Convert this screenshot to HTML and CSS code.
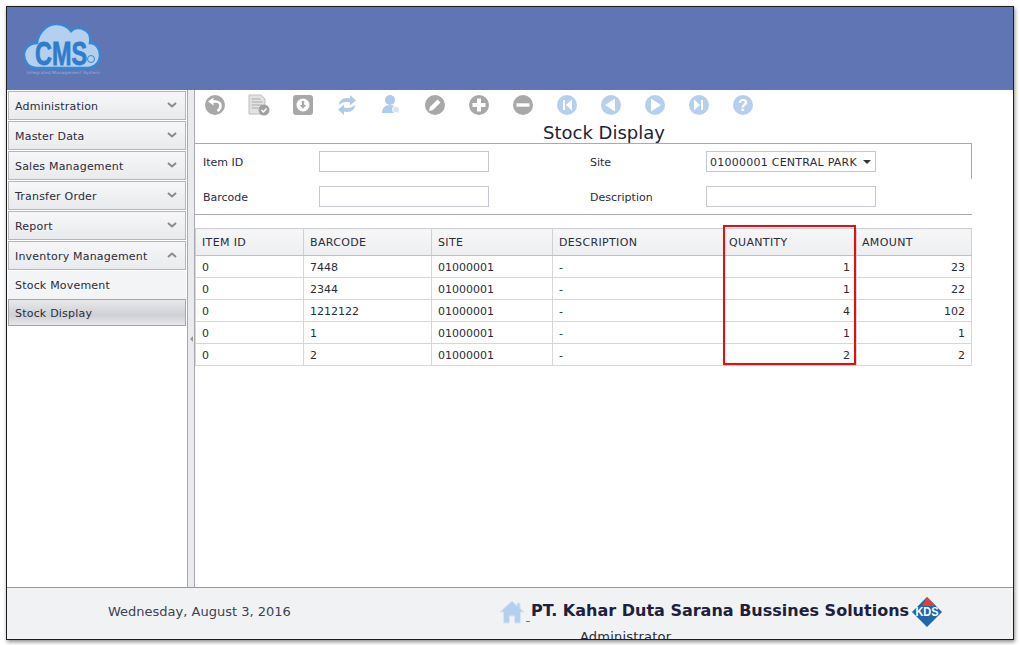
FILE: index.html
```html
<!DOCTYPE html>
<html lang="en">
<head>
<meta charset="UTF-8">
<title>Stock Display</title>
<link rel="stylesheet" href="styles.css">
</head>
<body>
<div class="window">
    <div class="header">
        <svg class="logo" width="80" height="56" viewBox="0 0 80 56">
            <path d="M14 45C5 45 1 38 1 32C1 25 7 20 14 20C15 10 23 1 34 1C41 1 45 4 48 8C51 5 56 4 60 6C66 8 68 14 67 20C73 20 77 26 77 32C77 39 72 45 64 45Z" fill="#b5d0ee" stroke="#3a86d4" stroke-width="2.500"/>
            <text class="logo-text" x="12" y="42" textLength="52" lengthAdjust="spacingAndGlyphs">CMS</text>
            <circle cx="68" cy="36" r="3.500" fill="#b5d0ee" stroke="#3a86d4"/>
            <text class="logo-sub" x="4" y="51" textLength="73" lengthAdjust="spacingAndGlyphs">Integrated Management System</text>
        </svg>
    </div>
    <div class="main">
        <div class="sidebar">
            <div class="menu-head">Administration <svg class="chev" viewBox="0 0 10 6"><path d="M1 1l4 3.500L9 1" /></svg></div>
            <div class="menu-head">Master Data <svg class="chev" viewBox="0 0 10 6"><path d="M1 1l4 3.500L9 1" /></svg></div>
            <div class="menu-head">Sales Management <svg class="chev" viewBox="0 0 10 6"><path d="M1 1l4 3.500L9 1" /></svg></div>
            <div class="menu-head">Transfer Order <svg class="chev" viewBox="0 0 10 6"><path d="M1 1l4 3.500L9 1" /></svg></div>
            <div class="menu-head">Report <svg class="chev" viewBox="0 0 10 6"><path d="M1 1l4 3.500L9 1" /></svg></div>
            <div class="menu-head">Inventory Management <svg class="chev" viewBox="0 0 10 6"><path d="M1 5l4-3.500L9 5" /></svg></div>
            <div class="menu-item">Stock Movement</div>
            <div class="menu-item menu-item-active">Stock Display</div>
        </div>
        <div class="splitter"><span class="split-arrow"></span></div>
        <div class="content">
            <div class="toolbar">
                <svg class="tool" viewBox="0 0 22 22"><circle cx="11" cy="11" r="10" fill="#a8a8a8"/><path d="M8 7.500h3.500c3 0 5 2 5 4.500c0 2-1 3.500-3 5" stroke="#fff" stroke-width="2.600" fill="none"/><path d="M9.500 3.500v8L4 7.500z" fill="#fff"/></svg>
                <svg class="tool" viewBox="0 0 22 22"><path d="M1 1h12l4 4v15H1z" fill="#e2e2e2" stroke="#bdbdbd"/><path d="M3.500 5h9M3.500 8h11M3.500 11h11M3.500 14h7" stroke="#aaa"/><circle cx="16" cy="16" r="5.500" fill="#a0a0a0"/><path d="M13.500 16l2 2 3-3.500" stroke="#fff" stroke-width="1.500" fill="none"/></svg>
                <svg class="tool" viewBox="0 0 22 22"><rect x="1" y="1" width="20" height="20" rx="3" fill="#a8a8a8"/><circle cx="11" cy="11" r="6.500" fill="#fff"/><path d="M9.800 7h2.400v4h2L11 14.800 7.800 11h2z" fill="#a8a8a8"/></svg>
                <svg class="tool" viewBox="0 0 22 22"><path d="M3 11C3 6 8 3 14 4.500V1l6 5.500-6 5V8.500C10 7.500 6 8.500 3 11z" fill="#aecbec"/><path d="M19 11c0 5-5 8-11 6.500V21l-6-5.500 6-5v3c4 1 8 0 11-2.500z" fill="#aecbec"/></svg>
                <svg class="tool" viewBox="0 0 22 22"><circle cx="10" cy="6" r="5" fill="#aecbec"/><path d="M2 19c0-5 3-8 8-8s9 3 9 8z" fill="#aecbec"/><circle cx="16" cy="15.500" r="3.500" fill="#d5e3f4" stroke="#fff"/></svg>
                <svg class="tool" viewBox="0 0 22 22"><circle cx="11" cy="11" r="10" fill="#a8a8a8"/><path d="M13.500 5.500l3 3L9 16l-4 1 1-4z" fill="#fff"/></svg>
                <svg class="tool" viewBox="0 0 22 22"><circle cx="11" cy="11" r="10" fill="#a8a8a8"/><path d="M9 4.500h4V9h4.500v4H13v4.500H9V13H4.500V9H9z" fill="#fff"/></svg>
                <svg class="tool" viewBox="0 0 22 22"><circle cx="11" cy="11" r="10" fill="#a8a8a8"/><rect x="4.500" y="9.300" width="13" height="3.400" fill="#fff"/></svg>
                <svg class="tool" viewBox="0 0 22 22"><circle cx="11" cy="11" r="10" fill="#b5d0ee"/><path d="M7 6h2v10H7zM16 5.500v11L10 11z" fill="#fff"/></svg>
                <svg class="tool" viewBox="0 0 22 22"><circle cx="11" cy="11" r="10" fill="#b5d0ee"/><path d="M15 4.500v13L5 11z" fill="#fff"/></svg>
                <svg class="tool" viewBox="0 0 22 22"><circle cx="11" cy="11" r="10" fill="#b5d0ee"/><path d="M7 4.500v13L17 11z" fill="#fff"/></svg>
                <svg class="tool" viewBox="0 0 22 22"><circle cx="11" cy="11" r="10" fill="#b5d0ee"/><path d="M13 6h2v10h-2zM6 5.500v11L12 11z" fill="#fff"/></svg>
                <svg class="tool" viewBox="0 0 22 22"><circle cx="11" cy="11" r="10" fill="#b5d0ee"/><text class="tool-help" x="11" y="16.500">?</text></svg>
            </div>
            <div class="page-title">Stock Display</div>
            <div class="filter">
                <div class="filter-row">
                    <label class="filter-label">Item ID</label>
                    <input class="filter-input" type="text">
                    <label class="filter-label filter-label-2">Site</label>
                    <div class="filter-select">01000001 CENTRAL PARK <span class="caret"></span></div>
                </div>
                <div class="filter-row filter-row-2">
                    <label class="filter-label">Barcode</label>
                    <input class="filter-input" type="text">
                    <label class="filter-label filter-label-2">Description</label>
                    <input class="filter-input" type="text">
                </div>
            </div>
            <div class="grid-wrap">
                <table class="grid">
                    <colgroup>
                        <col class="c1"><col class="c2"><col class="c3"><col class="c4"><col class="c5"><col class="c6">
                    </colgroup>
                    <thead>
                        <tr><th>ITEM ID</th><th>BARCODE</th><th>SITE</th><th>DESCRIPTION</th><th>QUANTITY</th><th>AMOUNT</th></tr>
                    </thead>
                    <tbody>
                        <tr><td>0</td><td>7448</td><td>01000001</td><td>-</td><td class="num">1</td><td class="num">23</td></tr>
                        <tr><td>0</td><td>2344</td><td>01000001</td><td>-</td><td class="num">1</td><td class="num">22</td></tr>
                        <tr><td>0</td><td>1212122</td><td>01000001</td><td>-</td><td class="num">4</td><td class="num">102</td></tr>
                        <tr><td>0</td><td>1</td><td>01000001</td><td>-</td><td class="num">1</td><td class="num">1</td></tr>
                        <tr><td>0</td><td>2</td><td>01000001</td><td>-</td><td class="num">2</td><td class="num">2</td></tr>
                    </tbody>
                </table>
                <div class="red-box"></div>
            </div>
        </div>
    </div>
    <div class="footer">
        <div class="foot-date">Wednesday, August 3, 2016</div>
        <div class="foot-brand">
            <div class="brand-row">
                <svg class="home" viewBox="0 0 26 24"><path d="M13 1L1 12h3.500v11h6v-7h5v7h6V12H25L21 8.500V3h-3v3z" fill="#b5d0ee" stroke="#d8e4f2"/></svg>
                <span class="brand-dash"></span><span class="brand-name">PT. Kahar Duta Sarana Bussines Solutions</span>
                <svg class="kds" viewBox="0 0 30 30">
                    <path d="M15 0L30 15 15 30 0 15z" fill="#1f66ae"/>
                    <path d="M15 0L24 9H10z" fill="#d9433f"/>
                    <text class="kds-text" x="15" y="19" textLength="23" lengthAdjust="spacingAndGlyphs">KDS</text>
                </svg>
            </div>
            <div class="brand-user">Administrator</div>
        </div>
    </div>
</div>
</body>
</html>
```

FILE: styles.css
```css
* {
    box-sizing: border-box;
}
body {
    margin: 0;
    padding: 6px;
    background: #fff;
    font-family: "DejaVu Sans", Verdana, sans-serif;
    font-size: 11px;
    color: #2b2b3c;
    overflow: hidden;
}
.window {
    display: flex;
    flex-direction: column;
    width: 1008px;
    height: 634px;
    border: 1px solid #1c1c1c;
    box-shadow: 1px 2px 4px rgba(0, 0, 0, 0.45);
    overflow: hidden;
}

/* header */
.header {
    height: 83px;
    flex: none;
    background: #5f75b4;
    padding: 16px 0 0 16px;
}
.logo {
    display: block;
}
.logo-text {
    font-family: "Liberation Sans", sans-serif;
    font-weight: bold;
    font-size: 34px;
    fill: #2f7ccc;
    stroke: #2f7ccc;
    stroke-width: 0.8;
}
.logo-sub {
    font-size: 4px;
    fill: #8fb4e2;
}

/* left menu */
.main {
    display: flex;
    flex: 1;
    min-height: 0;
}
.sidebar {
    width: 180px;
    flex: none;
    padding: 1px 1px 0 1px;
    background: #fff;
}
.menu-head {
    display: flex;
    justify-content: space-between;
    align-items: center;
    height: 29px;
    margin-bottom: 1px;
    padding: 2px 8px 0 6px;
    border: 1px solid #b5b5b8;
    background: linear-gradient(#f7f7f8, #e9eaed);
    letter-spacing: 0.2px;
}
.chev {
    width: 10px;
    height: 6px;
    margin-bottom: 3px;
    fill: none;
    stroke: #8a8a8a;
    stroke-width: 2;
}
.menu-item {
    height: 28px;
    line-height: 30px;
    padding: 0 7px;
    background: #f3f4f6;
    letter-spacing: 0.2px;
}
.menu-item-active {
    height: 27px;
    line-height: 27px;
    padding: 0 6px;
    border: 1px solid #a6a6aa;
    background: linear-gradient(#e9e9ec, #cfd0d5 60%, #e6e6e9);
}
.splitter {
    display: flex;
    align-items: center;
    justify-content: center;
    width: 8px;
    flex: none;
    background: #eaebef;
    border-left: 1px solid #a9a9af;
    border-right: 1px solid #a9a9af;
}
.split-arrow {
    border-top: 3px solid transparent;
    border-bottom: 3px solid transparent;
    border-right: 3px solid #999;
}

/* content */
.content {
    flex: 1;
    min-width: 0;
}
.toolbar {
    display: flex;
    gap: 22px;
    padding: 4px 0 0 9px;
    height: 27px;
}
.tool {
    width: 22px;
    height: 22px;
    flex: none;
}
.tool-help {
    font-family: "Liberation Sans", sans-serif;
    font-size: 16px;
    font-weight: bold;
    fill: #fff;
    text-anchor: middle;
}
.page-title {
    height: 26px;
    width: 818px;
    text-align: center;
    font-size: 18px;
    line-height: 32px;
    color: #22223a;
}
.filter {
    position: relative;
    width: 777px;
    height: 72px;
    border-top: 1px solid #a9a9b2;
    border-bottom: 1px solid #a9a9b2;
    padding: 7px 0 0 8px;
}
.filter::after {
    content: "";
    position: absolute;
    right: 0;
    top: 0;
    height: 35px;
    border-right: 1px solid #a9a9b2;
}
.filter-row {
    display: flex;
    align-items: center;
    height: 21px;
}
.filter-row-2 {
    margin-top: 14px;
}
.filter-label {
    width: 116px;
    flex: none;
    padding-top: 2px;
}
.filter-label-2 {
    margin-left: 101px;
}
.filter-input {
    width: 170px;
    height: 21px;
    border: 1px solid #c8c8d0;
    background: #fff;
    padding: 0;
}
.filter-select {
    display: flex;
    align-items: center;
    justify-content: space-between;
    width: 170px;
    height: 21px;
    border: 1px solid #c8c8d0;
    padding: 1px 4px 0 3px;
    white-space: nowrap;
    letter-spacing: 0.25px;
}
.caret {
    border-left: 4px solid transparent;
    border-right: 4px solid transparent;
    border-top: 4px solid #333;
}
.grid-wrap {
    position: relative;
    width: 777px;
    margin-top: 13px;
}
.grid {
    width: 776px;
    table-layout: fixed;
    border-collapse: collapse;
    border: 1px solid #a9a9b2;
}
.c1 { width: 108px; }
.c2 { width: 128px; }
.c3 { width: 121px; }
.c4 { width: 171px; }
.c5 { width: 133px; }
.c6 { width: 115px; }
.grid th {
    height: 27px;
    padding: 0 6px;
    text-align: left;
    font-weight: normal;
    letter-spacing: 0.35px;
    background: linear-gradient(#f6f6f7, #eeeff1);
    border: 1px solid #cfcfd6;
    border-bottom-color: #bfc0c8;
}
.grid th:nth-child(n+5) {
    padding-left: 5px;
}
.grid td {
    height: 22px;
    padding: 2px 6px 0;
    border: 1px solid #d6d6dc;
}
.grid .num {
    text-align: right;
    padding-right: 6px;
}
.red-box {
    position: absolute;
    left: 528px;
    top: -3px;
    width: 133px;
    height: 140px;
    border: 2px solid #f00b0b;
}

/* footer */
.footer {
    display: flex;
    flex: none;
    height: 52px;
    border-top: 1px solid #9a9a9e;
    background: #f1f2f4;
    overflow: hidden;
}
.foot-date {
    width: 492px;
    padding: 16px 0 0 101px;
    font-size: 13px;
    color: #3b4252;
    flex: none;
}
.foot-brand {
    padding-top: 10px;
    flex: 1;
}
.brand-row {
    display: flex;
    align-items: center;
    height: 28px;
}
.home {
    width: 26px;
    height: 24px;
    flex: none;
}
.brand-dash {
    width: 4px;
    height: 1px;
    margin: 0 1px 0 1px;
    background: #5f75b4;
    align-self: flex-end;
    margin-bottom: 4px;
}
.brand-name {
    font-size: 16px;
    font-weight: bold;
    color: #20203c;
    white-space: nowrap;
    margin-bottom: 4px;
}
.kds {
    width: 30px;
    height: 30px;
    margin-left: 3px;
    flex: none;
}
.kds-text {
    font-family: "Liberation Sans", sans-serif;
    font-size: 12px;
    font-weight: bold;
    fill: #fff;
    text-anchor: middle;
}
.brand-user {
    padding-left: 81px;
    margin-top: 3px;
    font-size: 13px;
    letter-spacing: 0.2px;
}
```
